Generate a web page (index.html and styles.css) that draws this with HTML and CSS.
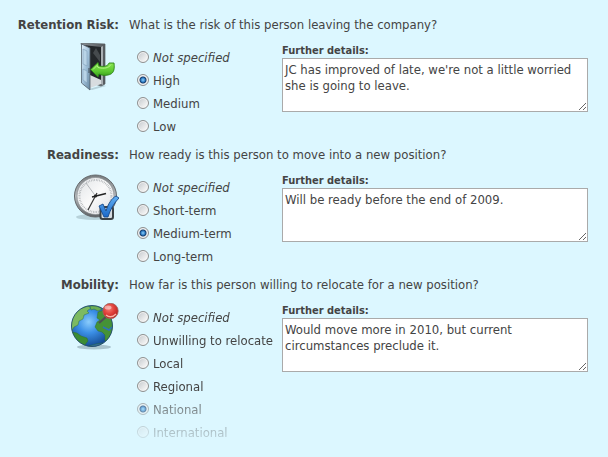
FILE: index.html
```html
<!DOCTYPE html>
<html lang="en">

<head>
    <meta charset="UTF-8">
    <meta name="viewport" content="width=device-width, initial-scale=1.0">
    <title>Succession Planning</title>
    <link rel="stylesheet" href="styles.css">
</head>

<body>

    <form id="planningForm">
        <section class="question" role="radiogroup" aria-labelledby="riskTitle">
            <h2 id="riskTitle">Retention Risk:</h2>
            <p>What is the risk of this person leaving the company?</p>

            <!-- open door -->
            <svg class="icon" width="50" height="48" viewBox="0 0 50 48" aria-hidden="true">
                <defs>
                    <linearGradient id="doorPanel" x1="0" y1="0" x2="1" y2="1">
                        <stop offset="0" stop-color="#e3f1fa"/>
                        <stop offset=".5" stop-color="#a3c3dc"/>
                        <stop offset="1" stop-color="#66869f"/>
                    </linearGradient>
                    <linearGradient id="doorFrame" x1="0" y1="0" x2="1" y2="0">
                        <stop offset="0" stop-color="#8c9196"/>
                        <stop offset="1" stop-color="#55595d"/>
                    </linearGradient>
                    <linearGradient id="arrow" x1="0" y1="0" x2="0" y2="1">
                        <stop offset="0" stop-color="#8be653"/>
                        <stop offset=".6" stop-color="#5cc830"/>
                        <stop offset="1" stop-color="#359a18"/>
                    </linearGradient>
                </defs>
                <path d="M20 46L34 42L37 43L23 47Z" fill="#8fa9b3" opacity=".5"/>
                <path d="M12 0L36 1L36 41L32 43L20 39Z" fill="url(#doorFrame)" stroke="#555b60" stroke-width=".7"/>
                <path d="M14 2L32 4L32 37L20 36Z" fill="#23272a"/>
                <path d="M32 4L34 3L34 42L32 41Z" fill="#aaafb3"/>
                <path d="M21 32L32 37L32 41L21 45Z" fill="#d8dcdf"/>
                <path d="M24 10L31 19L31 12L27 5Z" fill="#454a4d"/>
                <path d="M12.500 1L21 5L21 47L12.500 40Z" fill="url(#doorPanel)" stroke="#53606b" stroke-width=".8"/>
                <path d="M14 6L18 8L18 23L14 21ZM14 26L18 28L18 40L14 37Z" fill="#b9d4e7" stroke="#80a0b8" stroke-width=".6"/>
                <path d="M20 25V30" stroke="#3e4a55" stroke-width="1"/>
                <path d="M21.500 26.500L29 19.500L30 23C36 24 39 23 40 20L45 20C46 28 44 31 39 32C35 33 32 32 30 31L29 34Z" fill="url(#arrow)" stroke="#2c8419" stroke-width=".9" stroke-linejoin="round"/>
                <path d="M24 26.500L28 22.500L29 24.500C35 26 40 25 42 21.500" fill="none" stroke="#b8f58a" stroke-width=".9"/>
            </svg>

            <ul class="options">
                <li><input type="radio" name="risk" id="risk0"><label for="risk0"><em>Not specified</em></label></li>
                <li><input type="radio" name="risk" id="risk1" checked><label for="risk1">High</label></li>
                <li><input type="radio" name="risk" id="risk2"><label for="risk2">Medium</label></li>
                <li><input type="radio" name="risk" id="risk3"><label for="risk3">Low</label></li>
            </ul>

            <div class="details">
                <label for="riskDetails">Further details:</label>
                <textarea id="riskDetails" name="riskDetails">JC has improved of late, we're not a little worried she is going to leave.</textarea>
            </div>
        </section>

        <section class="question" role="radiogroup" aria-labelledby="readyTitle">
            <h2 id="readyTitle">Readiness:</h2>
            <p>How ready is this person to move into a new position?</p>

            <!-- clock with tick box -->
            <svg class="icon" width="50" height="48" viewBox="0 0 50 48" aria-hidden="true">
                <defs>
                    <linearGradient id="clockRim" x1="0" y1="0" x2="0" y2="1">
                        <stop offset="0" stop-color="#777b7e"/>
                        <stop offset=".5" stop-color="#b8bcbf"/>
                        <stop offset="1" stop-color="#5e6265"/>
                    </linearGradient>
                    <linearGradient id="clockFace" x1="0" y1="0" x2="1" y2="1">
                        <stop offset="0" stop-color="#dfe2e5"/>
                        <stop offset=".5" stop-color="#fafafa"/>
                        <stop offset="1" stop-color="#dcdfe2"/>
                    </linearGradient>
                    <linearGradient id="tick" x1="0" y1="0" x2="0" y2="1">
                        <stop offset="0" stop-color="#62b2f5"/>
                        <stop offset="1" stop-color="#1b68c9"/>
                    </linearGradient>
                </defs>
                <ellipse cx="25" cy="44" rx="18" ry="3" fill="#7f9aa3" opacity=".4"/>
                <circle cx="26.500" cy="23" r="21" fill="url(#clockRim)" stroke="#64686b" stroke-width="1"/>
                <circle cx="26.500" cy="23" r="18.500" fill="url(#clockFace)" stroke="#8d9194" stroke-width=".7"/>
                <circle cx="26.500" cy="23" r="16" fill="none" stroke="#a4a8ac" stroke-width="2" stroke-dasharray=".6 1.076"/>
                <path d="M26.500 23L17 10" stroke="#a2a6a9" stroke-width=".8"/>
                <path d="M23 24L37 20.500" stroke="#222" stroke-width="1.300"/>
                <path d="M28 20L19 37" stroke="#333" stroke-width="1.200"/>
                <circle cx="26.500" cy="23" r="1.500" fill="#222"/>
                <rect x="31.500" y="34" width="12.500" height="12" rx="2" fill="#d7dde2" stroke="#3d4347" stroke-width="2"/>
                <path d="M30 33L34 31L37 38C39 31 43 25 47 23L50 25C45 30 41 37 39 44L35 44Z" fill="url(#tick)" stroke="#174b8c" stroke-width=".9" stroke-linejoin="round"/>
            </svg>

            <ul class="options">
                <li><input type="radio" name="ready" id="ready0"><label for="ready0"><em>Not specified</em></label></li>
                <li><input type="radio" name="ready" id="ready1"><label for="ready1">Short-term</label></li>
                <li><input type="radio" name="ready" id="ready2" checked><label for="ready2">Medium-term</label></li>
                <li><input type="radio" name="ready" id="ready3"><label for="ready3">Long-term</label></li>
            </ul>

            <div class="details">
                <label for="readyDetails">Further details:</label>
                <textarea id="readyDetails" name="readyDetails">Will be ready before the end of 2009.</textarea>
            </div>
        </section>

        <section class="question" role="radiogroup" aria-labelledby="mobilityTitle">
            <h2 id="mobilityTitle">Mobility:</h2>
            <p>How far is this person willing to relocate for a new position?</p>

            <!-- globe with pin -->
            <svg class="icon" width="50" height="48" viewBox="0 0 50 48" aria-hidden="true">
                <defs>
                    <radialGradient id="sea" cx=".42" cy=".4" r=".6">
                        <stop offset="0" stop-color="#8accfc"/>
                        <stop offset=".45" stop-color="#3b8fe6"/>
                        <stop offset="1" stop-color="#164c94"/>
                    </radialGradient>
                    <radialGradient id="pinHead" cx=".4" cy=".35" r=".65">
                        <stop offset="0" stop-color="#f47f75"/>
                        <stop offset=".5" stop-color="#e2433d"/>
                        <stop offset="1" stop-color="#b9211f"/>
                    </radialGradient>
                    <clipPath id="globeClip"><circle cx="23" cy="23" r="20.500"/></clipPath>
                </defs>
                <ellipse cx="25" cy="44" rx="17" ry="2.500" fill="#627b84" opacity=".4"/>
                <circle cx="23" cy="23" r="20.500" fill="url(#sea)"/>
                <g clip-path="url(#globeClip)" stroke="#2b6b2a" stroke-width=".4">
                    <path d="M2 21L4 12L11 6L19 3L22 5L18 8L20 10L15 12L14 16L10 18L9 22L5 24L2 29Z" fill="#7cba62"/>
                    <path d="M21 3L28 3L33 6L29 8L25 6L22 7Z" fill="#6cae56"/>
                    <path d="M29 9L35 7L39 10L45 19L44 30L40 37L36 38L36 32L33 29L29 28L26 24L28 19L31 17L28 15Z" fill="#459237"/>
                    <path d="M34 24L40 27L43 24" fill="none" stroke="#2e72bc" stroke-width="1.500"/>
                    <path d="M3 29L8 30L12 33L18 35L19 38L15 43L9 40Z" fill="#3c8c33"/>
                    <path d="M20 43L27 41L34 40L28 45Z" fill="#376f9d"/>
                </g>
                <circle cx="23" cy="23" r="20.500" fill="none" stroke="#254e69" stroke-width=".9"/>
                <path d="M30 20L38 13" stroke="#4b5055" stroke-width="2.200"/>
                <circle cx="41.500" cy="8" r="7.700" fill="url(#pinHead)" stroke="#9b6761" stroke-width=".8"/>
                <ellipse cx="39" cy="4.500" rx="3.500" ry="2" fill="#fff" opacity=".45"/>
                <path d="M37 12Q42 16 47 11" fill="none" stroke="#f9b4a8" stroke-width="1.500"/>
            </svg>

            <ul class="options fade">
                <li><input type="radio" name="mobility" id="mobility0"><label for="mobility0"><em>Not specified</em></label></li>
                <li><input type="radio" name="mobility" id="mobility1"><label for="mobility1">Unwilling to relocate</label></li>
                <li><input type="radio" name="mobility" id="mobility2"><label for="mobility2">Local</label></li>
                <li><input type="radio" name="mobility" id="mobility3"><label for="mobility3">Regional</label></li>
                <li><input type="radio" name="mobility" id="mobility4" checked><label for="mobility4">National</label></li>
                <li><input type="radio" name="mobility" id="mobility5"><label for="mobility5">International</label></li>
            </ul>

            <div class="details">
                <label for="mobilityDetails">Further details:</label>
                <textarea id="mobilityDetails" name="mobilityDetails">Would move more in 2010, but current circumstances preclude it.</textarea>
            </div>
        </section>
    </form>

</body>

</html>
```
FILE: styles.css
```css
body {
    margin: 0;
    padding: 16px 20px 0;
    background-color: #dcf7ff;
    color: #444;
    font-family: Tahoma, "DejaVu Sans Condensed", "DejaVu Sans", sans-serif;
    font-size: 13px;
    line-height: 18px;
}

.question {
    display: grid;
    grid-template-columns: 99px 145px 1fr;
    column-gap: 9px;
    row-gap: 9px;
    margin-bottom: 8px;
}

h2 {
    margin: 0;
    font-size: 13px;
    text-align: right;
    white-space: nowrap;
    justify-self: end;
}

p {
    grid-column: 2 / 4;
    margin: 0;
    padding-left: 1px;
}

.icon {
    justify-self: end;
}

.options {
    list-style: none;
    margin: 0;
    padding: 3px 0 0 9px;
}

.options li {
    display: flex;
    align-items: center;
    gap: 4px;
    height: 23px;
    white-space: nowrap;
}

.fade {
    -webkit-mask-image: linear-gradient(#000 92px, rgba(0, 0, 0, 0.7) 100px, rgba(0, 0, 0, 0.5) 114px, rgba(0, 0, 0, 0.35) 124px, rgba(0, 0, 0, 0.2) 138px);
    mask-image: linear-gradient(#000 92px, rgba(0, 0, 0, 0.7) 100px, rgba(0, 0, 0, 0.5) 114px, rgba(0, 0, 0, 0.35) 124px, rgba(0, 0, 0, 0.2) 138px);
}

input[type="radio"] {
    appearance: none;
    box-sizing: border-box;
    flex: none;
    width: 12px;
    height: 12px;
    margin: 0 0 2px;
    border: 1px solid #8e8f8f;
    border-radius: 50%;
    background: linear-gradient(135deg, #c3c8cc, #f4f4f4 80%);
    box-shadow: inset 0 0 0 1px #f4f4f4;
}

input[type="radio"]:checked {
    background: radial-gradient(circle at 50% 50%, #8fd0f8 0, #2f7fc8 2px, #173e6c 3px, #dfe4e8 4px);
}

.details label {
    display: block;
    font-size: 11px;
    font-weight: bold;
    line-height: 15px;
}

textarea {
    display: block;
    box-sizing: border-box;
    width: 100%;
    height: 54px;
    margin: 0;
    padding: 3px 2px;
    border: 1px solid #aaa;
    background-color: #fff;
    color: #444;
    font: inherit;
    line-height: 16px;
}
```
